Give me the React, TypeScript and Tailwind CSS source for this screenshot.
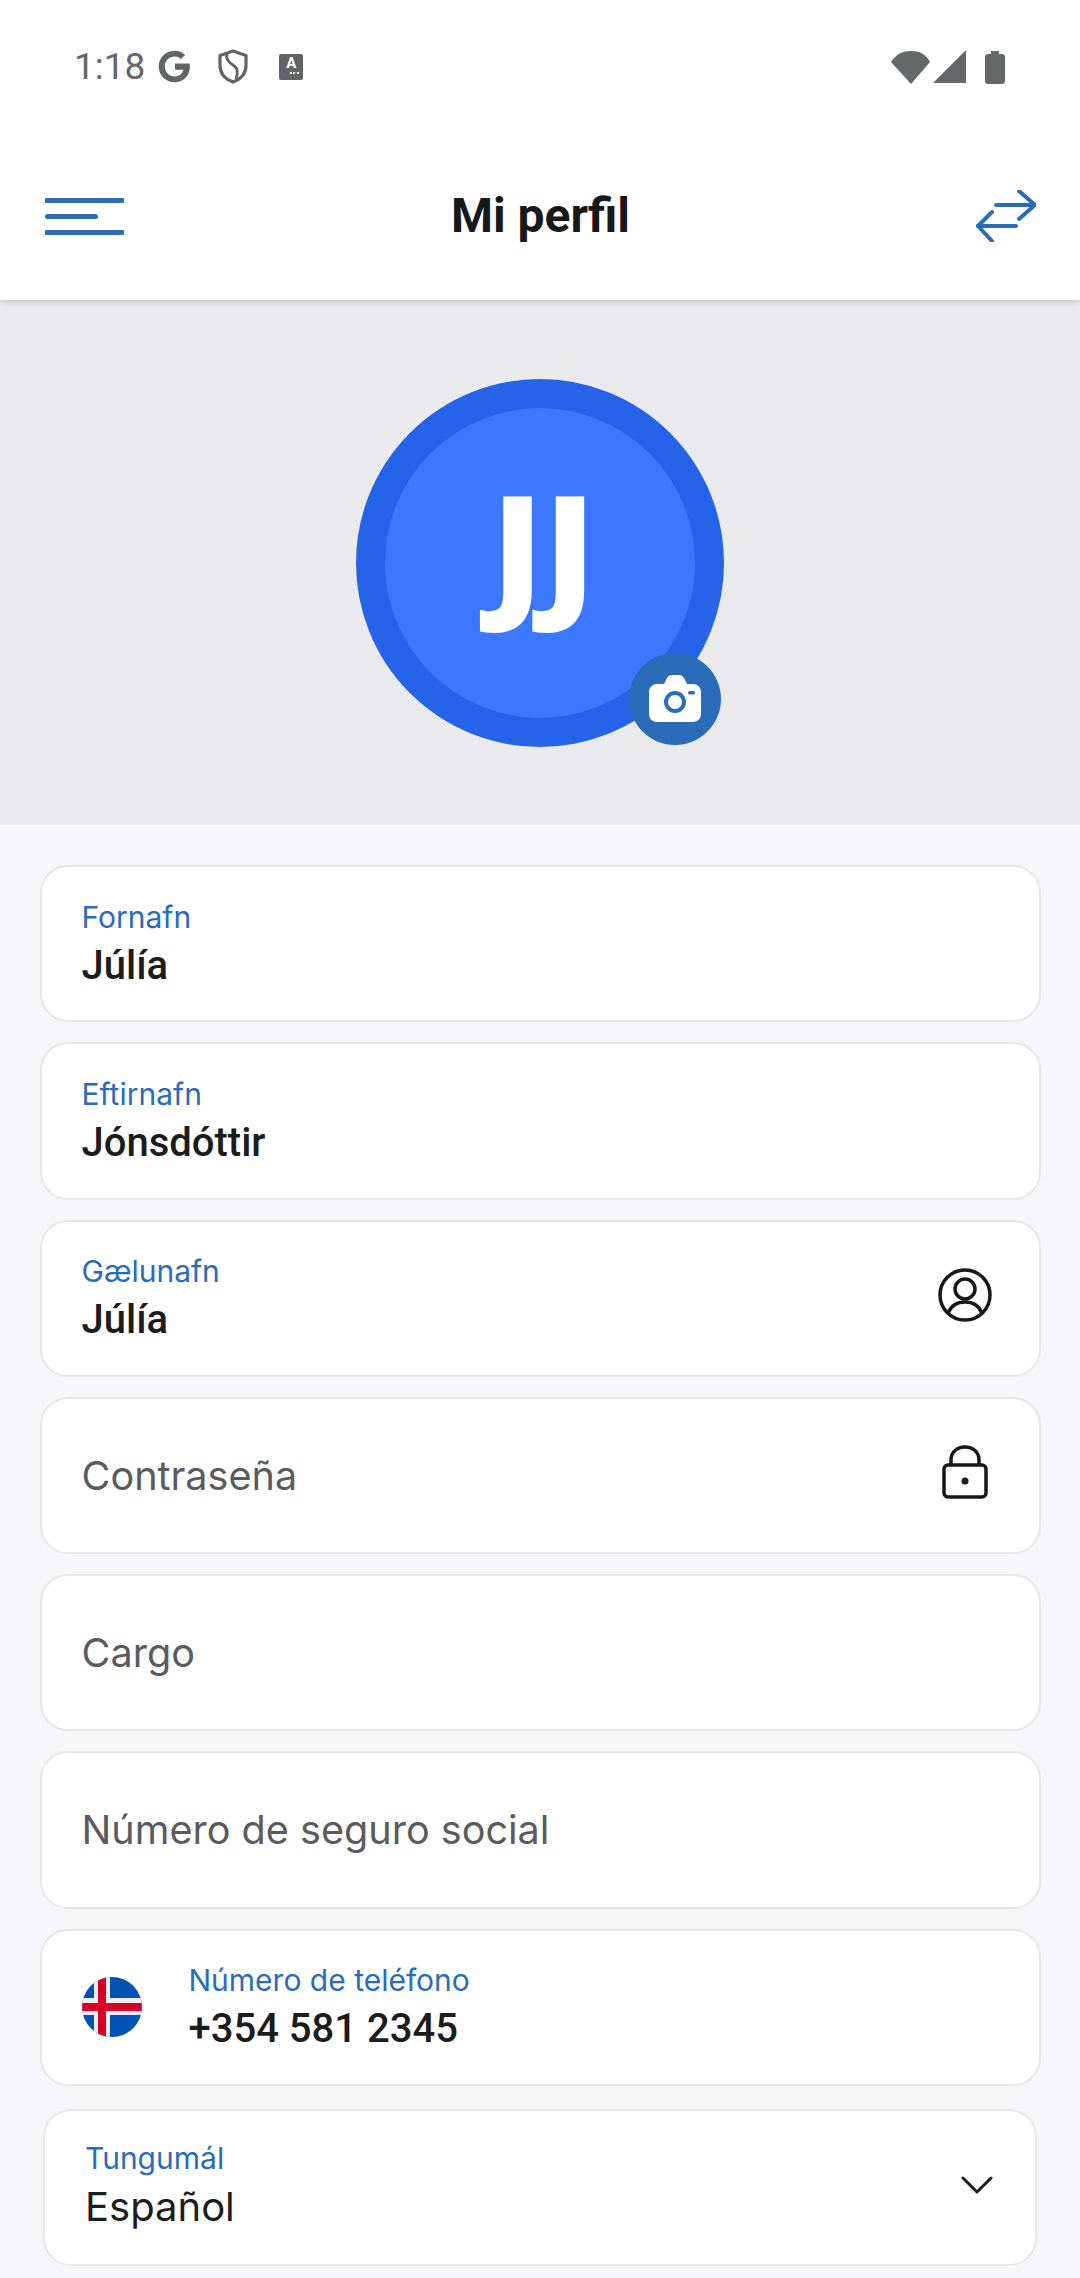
const INTER = "font-['Inter','Liberation_Sans',sans-serif]";
const ROBOTO = "font-['Roboto','Liberation_Sans',sans-serif]";

const GoogleIcon = () => (
  <svg width="33" height="33" viewBox="0 0 33 33" className="ml-[13px]">
    <path d="M17 13.500h14.600c.2 1 .3 2 .3 3.100C31.900 25.700 25.700 32.300 16.500 32.300 7.700 32.300.7 25.300.7 16.500S7.700.7 16.500.7c4.300 0 7.900 1.600 10.700 4.200l-4.300 4.200c-1.200-1.100-3.300-2.500-6.400-2.500-5.300 0-9.700 4.400-9.700 9.900s4.400 9.900 9.700 9.900c6.100 0 8.400-4.400 8.800-6.700H17z" fill="#636467" />
  </svg>
);

const ShieldIcon = () => (
  <svg width="30" height="35" viewBox="0 0 30 35" fill="none" stroke="#636467" className="ml-[27px]">
    <path d="M15 2 28 6.500v10c0 7.500-5 13.500-13 16.500C7 30 2 24 2 16.500v-10z" strokeWidth="3.200" strokeLinejoin="round" />
    <path d="M9 5c-1.500 5 1 8 6 11 4 2.500 6 6 3 14" strokeWidth="3" />
  </svg>
);

const KeyboardIcon = () => (
  <div className="ml-[31px] h-[26px] w-[24px] rounded-[2px] bg-[#636467] flex flex-col items-center">
    <span className={`${ROBOTO} text-[15px] leading-[19px] font-bold text-white`}>A</span>
    <div className="flex gap-[1.500px] mt-[-1px] ml-[6px]">
      <i className="block size-[2px] bg-white" />
      <i className="block size-[2px] bg-white" />
      <i className="block size-[2px] bg-white" />
    </div>
  </div>
);

const StatusBar = () => (
  <div className="relative z-20 bg-white h-[96px] pt-[37px] pl-[74px] pr-[74px] flex items-center justify-between">
    <div className="flex items-center">
      <span className={`${ROBOTO} text-[37px] leading-[44px] font-normal text-[#66676a]`}>1:18</span>
      <GoogleIcon />
      <ShieldIcon />
      <KeyboardIcon />
    </div>
    <svg width="115" height="34" viewBox="0 0 115 34">
      <path d="M0 12C5 4 12 1 20 1s15 3 19 11L20 34z" fill="#666769" />
      <path d="M42 33 75 0v33z" fill="#666769" />
      <path d="M94 7c0-2 1-3 3-3h3V1h8v3h3c2 0 3 1 3 3v24c0 2-1 3-3 3H97c-2 0-3-1-3-3z" fill="#666769" />
    </svg>
  </div>
);

const Header = () => (
  <header className="relative z-10 h-[204px] pl-[45px] pr-[44px] pt-[36px] bg-white shadow-[0_2px_6px_rgba(0,0,0,0.16)] grid grid-cols-[1fr_auto_1fr] items-center">
    <div className="flex flex-col gap-[11px] w-[79px]">
      <span className="block h-[5px] w-[79px] rounded-[1px] bg-[#2b6cb8]" />
      <span className="block h-[5px] w-[53px] rounded-full bg-[#2b6cb8]" />
      <span className="block h-[5px] w-[79px] rounded-[1px] bg-[#2b6cb8]" />
    </div>
    <h1 className={`${ROBOTO} text-[48px] leading-[56px] font-bold text-[#17181a]`}>Mi perfil</h1>
    <svg width="60" height="52" viewBox="0 0 60 52" fill="none" stroke="#2b6cb8" strokeWidth="4" strokeLinecap="round" strokeLinejoin="round" className="justify-self-end">
      <path d="M20 15h39" />
      <path d="M43 1l16 14-16 14" />
      <path d="M2 36h38" />
      <path d="M16 22 2 36l14 15" />
    </svg>
  </header>
);

const Avatar = () => (
  <section className="h-[525px] bg-[#eaeaed] flex items-center justify-center">
    <div className="relative size-[368px] rounded-full border-[29px] border-[#2563e9] bg-[#3b78ff] flex items-center justify-center">
      <span className="font-['Open_Sans',sans-serif] font-extrabold text-[146px] tracking-[1px] leading-none text-white mb-[38px] ml-[8px]">JJ</span>
      <div className="absolute right-[-26px] bottom-[-27px] size-[92px] rounded-full bg-[#2b6cb8] flex items-center justify-center">
        <svg width="52" height="47" viewBox="0 0 52 47">
          <path d="M8 9h7l2-4c1-3 3-5 6-5h7c3 0 5 2 6 5l2 4h6c4 0 8 3 8 8v22c0 5-4 8-8 8H8c-4 0-8-3-8-8V17c0-5 4-8 8-8z" fill="#fff" />
          <circle cx="26" cy="27" r="9" fill="none" stroke="#2b6cb8" strokeWidth="4" />
          <rect x="39" y="16" width="7" height="3.500" rx="1.750" fill="#2b6cb8" />
        </svg>
      </div>
    </div>
  </section>
);

const Card = ({ children, className = '' }: { children: React.ReactNode; className?: string }) => (
  <div className={`h-[157.300px] rounded-[28px] border-2 border-[#e6e7e9] bg-white flex items-center justify-between pl-[40px] ${className}`}>
    {children}
  </div>
);

const Filled = ({ label, value, medium = true }: { label: string; value: string; medium?: boolean }) => (
  <div className="flex flex-col mt-[2px]">
    <span className={`${INTER} text-[30px] leading-[37px] text-[#2b6cb8]`}>{label}</span>
    <span className={`${medium ? `${ROBOTO} font-[460]` : `${INTER}`} text-[40px] mt-[5px] leading-[50px] text-[#1b1c1e]`}>{value}</span>
  </div>
);

const Placeholder = ({ text }: { text: string }) => (
  <span className={`${INTER} text-[39.600px] leading-[48px] text-[#5a5b5e]`}>{text}</span>
);

const UserIcon = () => (
  <svg width="54" height="54" viewBox="0 0 54 54" fill="none" stroke="#17181a" strokeWidth="3.500" className="mb-[7px]">
    <circle cx="27" cy="27" r="25" />
    <circle cx="27" cy="21" r="10" />
    <path d="M10 45c3-7 9-11 17-11s14 4 17 11" />
  </svg>
);

const LockIcon = () => (
  <svg width="46" height="54" viewBox="0 0 46 54" fill="none" stroke="#17181a" strokeWidth="3.500" className="mb-[8px]">
    <path d="M9 20v-5C9 7 15 2 23 2s14 5 14 13v5" />
    <rect x="2" y="20" width="42" height="32" rx="4" />
    <circle cx="23" cy="36" r="3.500" fill="#17181a" stroke="none" />
  </svg>
);

const IcelandFlag = () => (
  <svg width="60" height="60" viewBox="0 0 60 60">
    <defs>
      <clipPath id="flag-circle">
        <circle cx="30" cy="30" r="30" />
      </clipPath>
    </defs>
    <g clipPath="url(#flag-circle)">
      <rect width="60" height="60" fill="#0052b4" />
      <rect x="12" width="16" height="60" fill="#f0f0f0" />
      <rect y="21" width="60" height="17" fill="#f0f0f0" />
      <rect x="16" width="8" height="60" fill="#d80027" />
      <rect y="26" width="60" height="8" fill="#d80027" />
    </g>
  </svg>
);

export default function App() {
  return (
    <div className="w-[1080px] h-[2278px] overflow-hidden bg-[#f6f6f9]">
      <StatusBar />
      <Header />
      <Avatar />
      <main className="px-[39.500px] pt-[40px] flex flex-col gap-[20px]">
        <Card className="pr-[47px]">
          <Filled label="Fornafn" value="Júlía" />
        </Card>
        <Card className="pr-[47px]">
          <Filled label="Eftirnafn" value="Jónsdóttir" />
        </Card>
        <Card className="pr-[47px]">
          <Filled label="Gælunafn" value="Júlía" />
          <UserIcon />
        </Card>
        <Card className="pr-[47px]">
          <Placeholder text="Contraseña" />
          <div className="w-[54px] flex justify-center">
            <LockIcon />
          </div>
        </Card>
        <Card className="pr-[47px]">
          <Placeholder text="Cargo" />
        </Card>
        <Card className="pr-[47px]">
          <Placeholder text="Número de seguro social" />
        </Card>
        <Card className="pr-[47px] justify-start gap-[47px]">
          <IcelandFlag />
          <Filled label="Número de teléfono" value="+354 581 2345" />
        </Card>
        <Card className="mx-[3.500px] mt-[3px] pr-[42px] pb-[5px]">
          <Filled label="Tungumál" value="Español" medium={false} />
          <svg width="32" height="18" viewBox="0 0 32 18" fill="none" stroke="#1b1c1e" strokeWidth="3" strokeLinecap="round" strokeLinejoin="round">
            <path d="M2 2l14 14L30 2" />
          </svg>
        </Card>
      </main>
    </div>
  );
}
